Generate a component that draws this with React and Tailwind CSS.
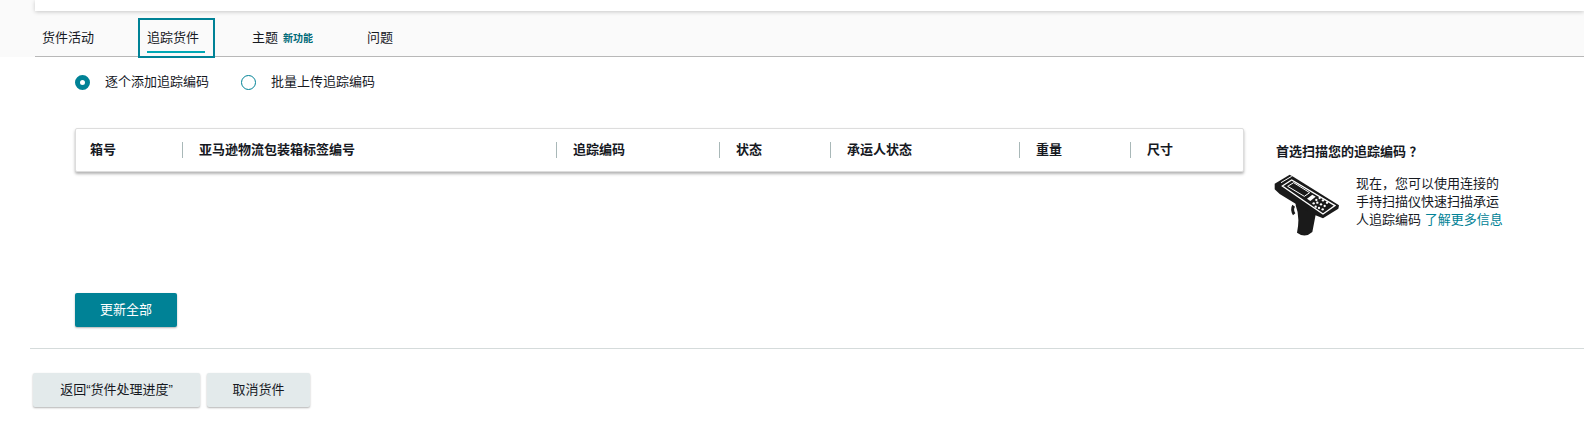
const font = { fontFamily: '"Liberation Sans", "Noto Sans CJK SC", sans-serif' };

const columns = [
  { label: '箱号', width: 'w-[92px]' },
  { label: '亚马逊物流包装箱标签编号', width: 'w-[374px]' },
  { label: '追踪编码', width: 'w-[163px]' },
  { label: '状态', width: 'w-[111px]' },
  { label: '承运人状态', width: 'w-[189px]' },
  { label: '重量', width: 'w-[111px]' },
  { label: '尺寸', width: 'w-[96px]' },
];

function ScannerIcon() {
  return (
    <svg viewBox="0 0 210 198" className="h-[66px] w-[70px] shrink-0">
      <path d="M68 85 L130 118 L118 180 Q96 200 72 182 Q82 135 68 100 Z" fill="#1a1a1a" />
      <path d="M58 98 Q50 112 60 130 L67 124 Q60 112 66 104 Z" fill="#1a1a1a" />
      <path d="M5 35 L50 8 L62 15 L198 100 L196 110 L150 139 L118 126 L20 66 L5 52 Z" fill="#1a1a1a" />
      <path d="M24 32 L56 13" stroke="#fff" strokeWidth="3" fill="none" />
      <path d="M28 42 L56 24 L186 101 L150 126 Z" fill="none" stroke="#fff" strokeWidth="4" />
      <path d="M44 43 L62 32 L110 62 L94 73 Z" fill="#1a1a1a" stroke="#fff" strokeWidth="3" />
      <path d="M102 80 L118 68 L128 74 L112 87 Z" fill="#fff" />
      <g fill="#fff">
        <circle cx="130" cy="84" r="3.5" /><circle cx="140" cy="78" r="3.5" /><circle cx="150" cy="85" r="3.5" />
        <circle cx="162" cy="92" r="3.5" /><circle cx="122" cy="94" r="3.5" /><circle cx="133" cy="92" r="3.5" />
        <circle cx="144" cy="97" r="3.5" /><circle cx="155" cy="102" r="3.5" /><circle cx="128" cy="104" r="3.5" />
        <circle cx="138" cy="108" r="3.5" /><circle cx="149" cy="112" r="3.5" />
      </g>
    </svg>
  );
}

function Radio({ checked, label }) {
  return (
    <label className="flex items-center whitespace-nowrap">
      {checked ? (
        <span className="h-[15px] w-[15px] rounded-full border-[5px] border-[#008296] bg-white" />
      ) : (
        <span className="h-[15px] w-[15px] rounded-full border border-[#008296] bg-white" />
      )}
      <span className="ml-[15px] text-[13px] leading-[18px] text-[#16191f]">{label}</span>
    </label>
  );
}

export default function App() {
  return (
    <div style={font} className="h-[446px] w-[1584px] overflow-hidden bg-white text-[#16191f]">
      <div className="h-[57px] bg-[#fafafa]">
        <div className="ml-[35px] h-[11px] bg-white shadow-[0_1px_4px_rgba(0,0,0,0.2)]" />
        <div className="ml-[35px] flex h-[46px] items-start border-b border-[#b8b8b8] text-[13px]">
          <div className="ml-[7px] mt-[18px] w-[96px] leading-[18px]">货件活动</div>
          <div className="mt-[7px] flex h-[40px] w-[77px] flex-col border-2 border-[#008296] pl-[7px] pt-[9px]">
            <span className="leading-[18px]">追踪货件</span>
            <span className="mt-[4px] h-[2px] w-[58px] bg-[#00a8b5]" />
          </div>
          <div className="ml-[37px] mt-[17px] flex w-[115px] items-center leading-[18px]">
            主题
            <span className="ml-[5px] mt-[2px] text-[10px] font-bold text-[#006a78]">新功能</span>
          </div>
          <div className="mt-[18px] leading-[18px]">问题</div>
        </div>
      </div>

      <div className="ml-[75px] mt-[16px] flex h-[18px]">
        <div className="w-[166px]">
          <Radio checked label="逐个添加追踪编码" />
        </div>
        <Radio label="批量上传追踪编码" />
      </div>

      <div className="ml-[75px] mt-[37px] flex h-[165px] items-start">
        <div className="flex h-[44px] w-[1169px] items-center rounded-[2px] border border-[#ddd] bg-white pl-[14px] shadow-[0_2px_3px_rgba(0,0,0,0.3)]">
          {columns.map((col, i) => (
            <div key={col.label} className={`flex h-[16px] items-center ${col.width} ${i > 0 ? 'border-l border-[#a9b8b8] pl-[16px]' : ''}`}>
              <span className="text-[13px] font-bold leading-[16px]">{col.label}</span>
            </div>
          ))}
        </div>
        <div className="ml-[32px] mt-[15px] w-[230px]">
          <div className="text-[13px] font-bold leading-[18px]">首选扫描您的追踪编码 ？</div>
          <div className="mt-[11px] -ml-[3px] flex">
            <ScannerIcon />
            <p className="ml-[13px] mt-[3px] w-[147px] text-[13px] leading-[18px] text-[#16191f]">
              现在，您可以使用连接的手持扫描仪快速扫描承运人追踪编码 <span className="text-[#008296]">了解更多信息</span>
            </p>
          </div>
        </div>
      </div>

      <button className="ml-[75px] block h-[34px] w-[102px] rounded-[2px] bg-[#008296] text-[13px] text-white shadow-[0_1px_2px_rgba(0,0,0,0.3)]">
        更新全部
      </button>

      <div className="ml-[30px] mt-[21px] border-t border-[#d5dbdb]" />

      <div className="ml-[33px] mt-[24px] flex gap-[7px]">
        <button className="h-[34px] w-[167px] rounded-[2px] bg-[#e3eaeb] text-[13px] shadow-[0_1px_2px_rgba(0,0,0,0.3)]">返回“货件处理进度”</button>
        <button className="h-[34px] w-[103px] rounded-[2px] bg-[#e3eaeb] text-[13px] shadow-[0_1px_2px_rgba(0,0,0,0.3)]">取消货件</button>
      </div>
    </div>
  );
}
